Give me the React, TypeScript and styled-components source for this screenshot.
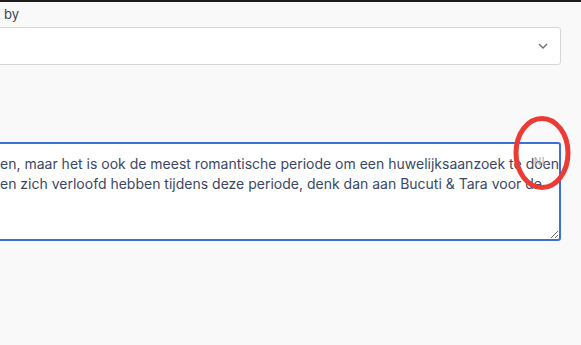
import React from "react";
import styled, { createGlobalStyle } from "styled-components";

const Global = createGlobalStyle`
    body {
        margin: 0;
        background: #f9f9f9;
        font-family: Inter, "Noto Sans", sans-serif;
        overflow: hidden;
    }
`;

const Page = styled.div`
    width: 581px;
    height: 345px;
    overflow: hidden;
`;

const TopBar = styled.div`
    height: 2px;
    background: #1c1c1c;
`;

const Label = styled.div`
    margin: 4px 0 0 4px;
    font-size: 13px;
    line-height: 16px;
    color: #3b4252;
`;

const Select = styled.div`
    margin: 5px 20px 0 -20px;
    height: 36px;
    background: #fff;
    border: 1px solid #d6d6d6;
    border-radius: 3px;
    display: flex;
    align-items: center;
    justify-content: flex-end;
    padding-right: 12px;
    color: #6b7280;
`;

const Field = styled.div`
    position: relative;
    margin: 77px 20px 0 -20px;
`;

const Area = styled.textarea`
    display: block;
    box-sizing: border-box;
    width: 100%;
    height: 99px;
    padding: 10px 10px 8px 18px;
    border: 2px solid #3f6ed8;
    border-radius: 3px;
    background: #fff;
    font-family: Inter, "Noto Sans", sans-serif;
    font-size: 14px;
    line-height: 20px;
    color: #3a4766;
    overflow: hidden;
    white-space: pre;
    outline: none;
`;

const Lang = styled.span`
    position: absolute;
    top: 13px;
    right: 13px;
    font-size: 10px;
    color: #a0a6b0;
    letter-spacing: 0.5px;
`;

const Ring = styled.svg`
    position: absolute;
    top: -27px;
    right: -11px;
`;

const text =
    "en, maar het is ook de meest romantische periode om een huwelijksaanzoek te doen.\nen zich verloofd hebben tijdens deze periode, denk dan aan Bucuti & Tara voor de";

export default function App() {
    return (
        <Page>
            <Global />
            <TopBar />
            <Label>by</Label>
            <Select>
                <svg width="10" height="6" viewBox="0 0 10 6">
                    <path d="M1 1l4 4 4-4" fill="none" stroke="#6b7280" strokeWidth="1.4" />
                </svg>
            </Select>
            <Field>
                <Area readOnly wrap="off" defaultValue={text} />
                <Lang>NL</Lang>
                <Ring width="60" height="76" viewBox="0 0 60 76">
                    <ellipse cx="30" cy="38" rx="26" ry="34.5" fill="none" stroke="#ec3b34" strokeWidth="5" />
                </Ring>
            </Field>
        </Page>
    );
}
